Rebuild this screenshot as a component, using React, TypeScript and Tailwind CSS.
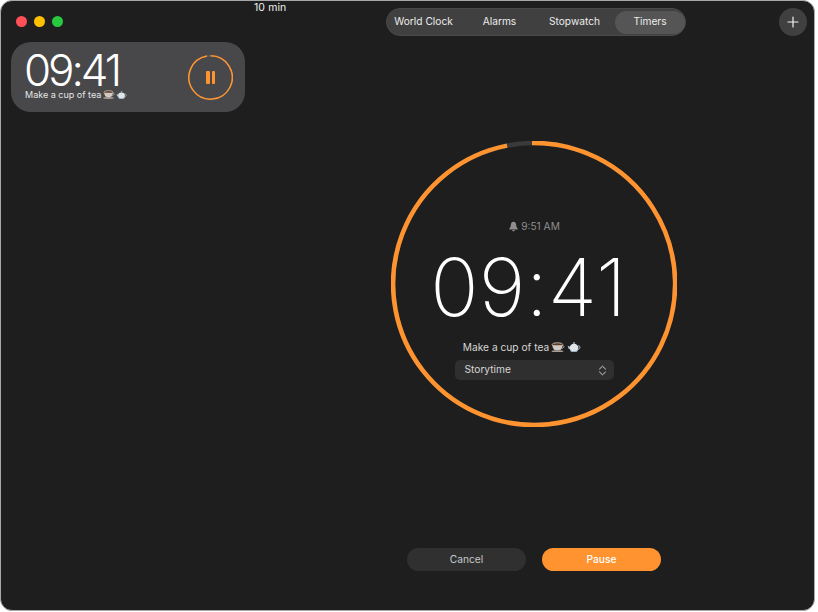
import React from "react";

function Cup({ w }: { w: number }) {
  return (
    <svg width={w} height={w * 0.78} viewBox="0 0 13 10" className="inline-block">
      <ellipse cx="6" cy="2.4" rx="5" ry="1.8" fill="#5b3a24" stroke="#d8d4cf" strokeWidth="0.7" />
      <path d="M1.2 3 C1.6 6 3 7.6 4 7.6 H8 C9 7.6 10.4 6 10.8 3 Z" fill="#cfc9c2" />
      <path d="M10.6 3.4 C12.6 3.2 12.6 5.6 10 5.8" fill="none" stroke="#bdb6ae" strokeWidth="0.8" />
      <ellipse cx="6" cy="8.6" rx="5.6" ry="1" fill="#a79f96" />
    </svg>
  );
}

function Pot({ w }: { w: number }) {
  return (
    <svg width={w} height={w * 0.78} viewBox="0 0 14 11" className="inline-block">
      <circle cx="7" cy="1" r="0.9" fill="#9fb0bd" />
      <ellipse cx="7" cy="6" rx="4.4" ry="4.2" fill="#dfe5e9" />
      <path d="M3 7.2 C4.5 9.8 9.5 9.8 11 7.2 L10.6 9 C9.4 10.6 4.6 10.6 3.4 9 Z" fill="#9eb0bf" />
      <path d="M3 5 L0.6 3.6 L1.6 6.8 L3.2 7.4 Z" fill="#c3ced6" />
      <path d="M11 4 C13.8 3.4 13.8 7 10.8 7.6" fill="none" stroke="#b8c4cd" strokeWidth="0.9" />
    </svg>
  );
}

export default function App() {
  return (
    <div className="w-[818px] h-[612px] bg-white overflow-hidden font-['Inter','Liberation_Sans',sans-serif]">
      <div className="w-[815px] h-[611px] bg-[#1e1e1e] rounded-[12px] border border-[#a8a8a8] flex overflow-hidden">
        <div className="w-[253px] shrink-0 flex flex-col">
          <div className="flex gap-[7px] pl-[15px] pt-[15px]">
            <span className="w-[11px] h-[11px] rounded-full bg-[#ff4f57]" />
            <span className="w-[11px] h-[11px] rounded-full bg-[#fdc000]" />
            <span className="w-[11px] h-[11px] rounded-full bg-[#28c840]" />
          </div>
          <div className="mt-[15px] ml-[10px] w-[234px] h-[70px] rounded-[20px] bg-[#48484a] flex items-center justify-between pl-[14px] pr-[12px]">
            <div className="flex flex-col mb-[2px]">
              <div className="text-[44px] leading-[38px] font-light text-white tracking-[-3.1px] -ml-[1px]">09:41</div>
              <div className="flex items-center gap-[1.5px] text-[9px] leading-[12px] text-[#e6e6e6]">
                <span>Make a cup of tea</span>
                <Cup w={12} />
                <Pot w={11} />
              </div>
            </div>
            <div className="relative w-[45px] h-[45px] flex items-center justify-center gap-[2px]">
              <svg width="45" height="45" viewBox="0 0 45 45" className="absolute inset-0">
                <circle cx="22.5" cy="22.5" r="21.7" fill="none" stroke="#5c5c5c" strokeWidth="1.5" />
                <path d="M22.5 0.8 A21.7 21.7 0 1 1 19 1.1" fill="none" stroke="#fe9330" strokeWidth="1.5" />
              </svg>
              <span className="w-[3.5px] h-[13px] bg-[#fe9330] rounded-[1px]" />
              <span className="w-[3.5px] h-[13px] bg-[#fe9330] rounded-[1px]" />
            </div>
          </div>
        </div>
        <div className="flex-1 flex flex-col items-center">
          <div className="w-full flex items-start">
            <div className="text-[10.5px] leading-[14px] text-[#f0f0f0] w-[132px] tracking-[0.1px]">10 min</div>
            <div className="mt-[7px] w-[300px] h-[28px] rounded-full bg-[#404040] border border-[#4a4a4a] flex items-center text-[10.2px] text-[#ececec] pl-[1px] pr-[0px]">
              <div className="w-[71px] text-center">World Clock</div>
              <div className="w-[81px] text-center">Alarms</div>
              <div className="w-[69px] text-center">Stopwatch</div>
              <div className="ml-[6px] flex-1 h-[23px] rounded-full bg-[#555555] flex items-center justify-center">Timers</div>
            </div>
            <div className="mt-[7px] ml-auto mr-[7px] w-[28px] h-[28px] rounded-full bg-[#404040] flex items-center justify-center">
              <svg width="12" height="12" viewBox="0 0 12 12">
                <path d="M6 1 V11 M1 6 H11" stroke="#f2f2f2" strokeWidth="1.2" strokeLinecap="round" />
              </svg>
            </div>
          </div>
          <div className="relative mt-[105px] w-[286px] h-[286px] flex flex-col items-center">
            <svg width="286" height="286" viewBox="0 0 286 286" className="absolute inset-0">
              <circle cx="143" cy="143" r="141" fill="none" stroke="#3a3a3a" strokeWidth="4.5" />
              <path d="M141 2 A141 141 0 1 1 116.1 4.6" fill="none" stroke="#fe9330" strokeWidth="4.5" />
            </svg>
            <div className="mt-[78px] flex items-center gap-[2px] text-[10.2px] leading-[14px] text-[#8e8e8e]">
              <svg width="11" height="11" viewBox="0 0 11 11">
                <path d="M5.5 0.8 C3.6 0.8 2.9 2.4 2.8 4 C2.7 5.8 2 6.8 1.3 7.6 C1 8 1.2 8.4 1.7 8.4 H9.3 C9.8 8.4 10 8 9.7 7.6 C9 6.8 8.3 5.8 8.2 4 C8.1 2.4 7.4 0.8 5.5 0.8 Z M4.2 9 C4.4 10 4.9 10.4 5.5 10.4 C6.1 10.4 6.6 10 6.8 9 Z" fill="#8e8e8e" />
              </svg>
              <span>9:51 AM</span>
            </div>
            <div className="mt-[9px] mr-[11px] text-[80px] leading-[90px] font-extralight text-white tracking-[0.2px]">09:41</div>
            <div className="mt-[8px] mr-[24px] flex items-center gap-[2px] text-[10.2px] leading-[14px] text-[#d6d6d6]">
              <span>Make a cup of tea</span>
              <Cup w={14} />
              <Pot w={14} />
            </div>
            <div className="mt-[6px] w-[159px] h-[20px] rounded-[5px] bg-[#2f2f2f] flex items-center justify-between pl-[10px] pr-[7px] text-[10.2px] text-[#d6d6d6]">
              <span>Storytime</span>
              <svg width="9" height="11" viewBox="0 0 9 11">
                <path d="M1.5 4 L4.5 1.2 L7.5 4 M1.5 7 L4.5 9.8 L7.5 7" fill="none" stroke="#d0d0d0" strokeWidth="1" strokeLinecap="round" strokeLinejoin="round" />
              </svg>
            </div>
          </div>
          <div className="mt-[121px] flex gap-[16px] text-[10.2px]">
            <div className="w-[119px] h-[23px] rounded-full bg-[#303030] text-[#c8c8c8] flex items-center justify-center">Cancel</div>
            <div className="w-[119px] h-[23px] rounded-full bg-[#fe9330] text-white font-medium flex items-center justify-center">Pause</div>
          </div>
        </div>
      </div>
    </div>
  );
}
